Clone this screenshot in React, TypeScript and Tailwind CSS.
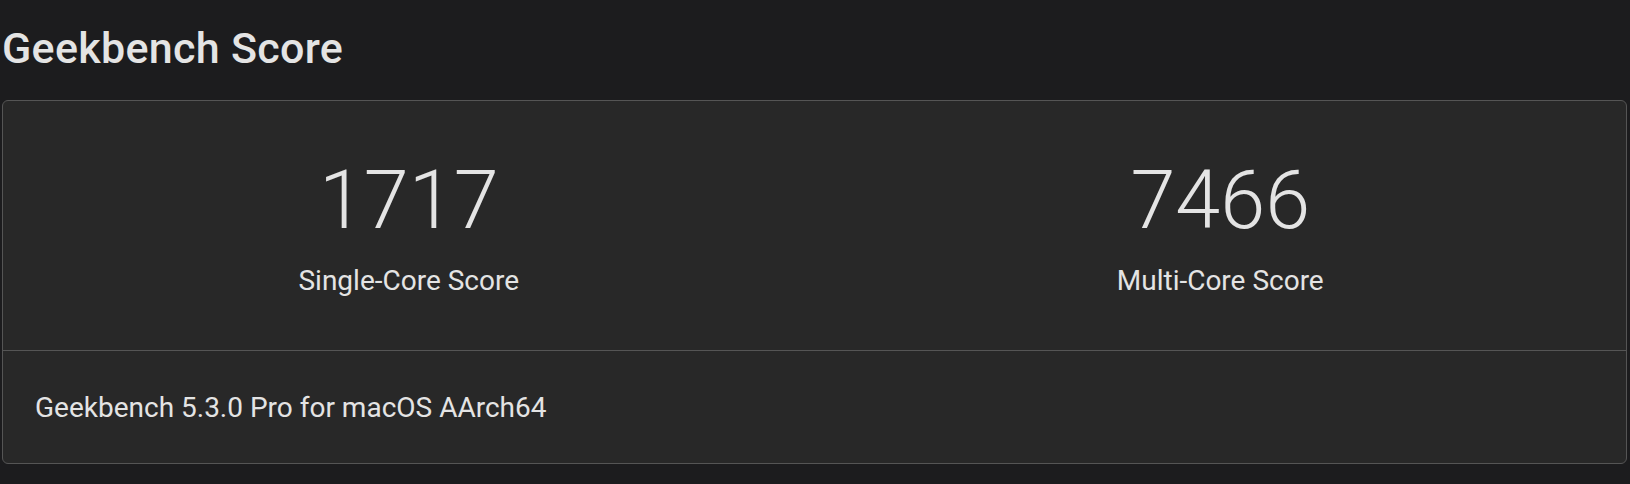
export default function App() {
  return (
    <div className="h-[484px] w-full overflow-hidden bg-[#1c1c1e] font-['Roboto',sans-serif] text-[#e4e4e4]">
      <h1 className="pl-[2px] pt-[23px] text-[43px] font-medium leading-[50px] tracking-[0.3px]">Geekbench Score</h1>
      <div className="ml-[2px] mr-[3px] mt-[27px] rounded-md border border-[#555] bg-[#282828]">
        <div className="grid grid-cols-2 pb-[53px] pt-[60px]">
          <ScoreBlock value="1717" label="Single-Core Score" />
          <ScoreBlock value="7466" label="Multi-Core Score" />
        </div>
        <div className="border-t border-[#555] px-8 pb-[39px] pt-[41px] text-[28px] leading-8">
          Geekbench 5.3.0 Pro for macOS AArch64
        </div>
      </div>
    </div>
  )
}

function ScoreBlock({ value, label }: { value: string; label: string }) {
  return (
    <div className="flex flex-col items-center">
      <div className="text-[81px] font-light leading-[80px]">{value}</div>
      <div className="mt-[24px] text-[28px] leading-8">{label}</div>
    </div>
  )
}
